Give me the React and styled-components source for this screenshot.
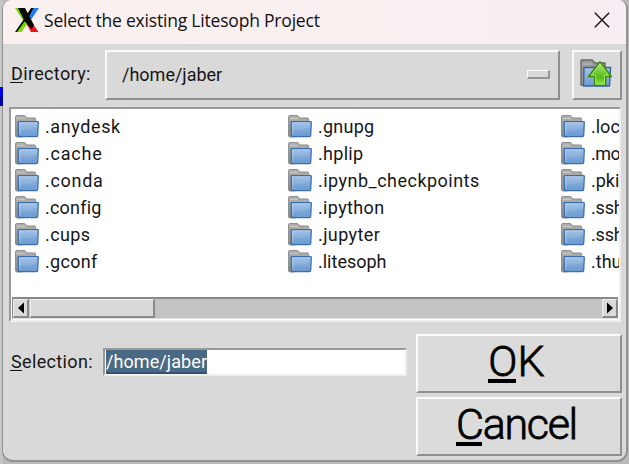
import React from 'react';
import styled, { createGlobalStyle } from 'styled-components';

const Global = createGlobalStyle`
  * { box-sizing: border-box; }
  body { margin: 0; overflow: hidden; background: #b9b9b9; }
`;

const Desktop = styled.div`
  position: relative;
  width: 629px;
  height: 464px;
  padding: 0 0 0 2px;
  background: linear-gradient(90deg, #c6c6c6 0 3px, #b9b9b9 3px);
  overflow: hidden;
  font-family: Roboto, 'Liberation Sans', sans-serif;
  color: #161616;
`;

const BlueSliver = styled.div`
  position: absolute;
  left: 0;
  top: 87px;
  width: 3px;
  height: 19px;
  background: linear-gradient(#0000f0 0 9px, #0000a8 9px);
`;

const Window = styled.div`
  width: 626px;
  height: 462px;
  border: 1px solid #929292;
  border-width: 0 2px 2px 1px;
  border-radius: 9px 9px 11px 11px;
  background: #d9d9d9;
  overflow: hidden;
`;

const TitleBar = styled.header`
  display: flex;
  align-items: center;
  height: 44px;
  padding: 0 16px 4px 12px;
  background: linear-gradient(90deg, #f9f0ef 0%, #f9efef 60%, #f8edf4 100%);
`;

const Title = styled.h1`
  flex: 1;
  margin: 0 0 0 5px;
  font: 400 17.5px/24px 'Open Sans', 'Noto Sans', sans-serif;
  letter-spacing: -0.2px;
  color: #111;
  white-space: nowrap;
`;

const Content = styled.main`
  padding: 6px 4px 0 6px;
`;

const DirectoryRow = styled.div`
  display: flex;
  height: 50px;
`;

const Label = styled.label`
  width: ${p => p.$width}px;
  padding-left: 2px;
  font-size: 18px;
  line-height: ${p => p.$line}px;
  letter-spacing: 0.35px;
  white-space: nowrap;
`;

const Mnemonic = styled.span`
  display: inline-block;
  line-height: 1;
  position: relative;
  &::after {
    content: '';
    position: absolute;
    left: ${p => (p.$large ? 0 : -1)}px;
    right: ${p => (p.$large ? 1 : 0)}px;
    bottom: 0;
    height: ${p => (p.$large ? 4 : 1.5)}px;
    background: currentColor;
  }
`;

const Raised = styled.button`
  display: flex;
  flex: none;
  align-items: center;
  justify-content: ${p => p.$justify || 'center'};
  width: ${p => p.$width}px;
  height: ${p => p.$height}px;
  padding: ${p => p.$pad || 0};
  margin: 0;
  border: 2px solid;
  border-color: #fafafa #909090 #909090 #fafafa;
  background: ${p => p.$bg || '#dbdbdb'};
  color: #161616;
  font: 400 18px Roboto, 'Liberation Sans', sans-serif;
`;

const UpButton = styled(Raised)`
  margin-left: 12px;
`;

const ActionButton = styled(Raised)`
  color: #000;
  font-size: 43px;
  font-weight: 300;
  line-height: 1;
  letter-spacing: ${p => p.$spacing}px;
  padding: 0 5px 5px 0;
  -webkit-text-stroke: 0.8px #000;
`;

const Indicator = styled.span`
  width: 23px;
  height: 9px;
  border: 1px solid;
  border-width: 1px 2px 2px 1px;
  border-color: #fff #949494 #949494 #fff;
`;

const FileList = styled.section`
  width: 612px;
  height: 215px;
  margin-top: 7px;
  border: 2px solid;
  border-color: #999 #efefef #efefef #999;
  padding: 4px 1px 0 2px;
  background: #fff;
`;

const Columns = styled.div`
  display: grid;
  grid-template-columns: repeat(3, 273px);
  height: 184px;
  width: 606px;
  overflow: hidden;
`;

const Column = styled.div`
  display: flex;
  flex-direction: column;
`;

const Entry = styled.div`
  display: flex;
  align-items: center;
  gap: 6px;
  height: 27px;
  padding-left: 2px;
  font-size: 18px;
  line-height: 24px;
  white-space: nowrap;
  letter-spacing: ${p => p.$spacing}px;
`;

const Scrollbar = styled.div`
  display: flex;
  width: 606px;
  height: 22px;
  margin-left: -1px;
  border: 2px solid #888;
  border-width: 2px 0 1px 1px;
  border-bottom-color: #ddd;
  background: #c3c3c3;
`;

const ScrollThumb = styled.div`
  width: 125px;
  margin-left: 1px;
  border: 1px solid;
  border-width: 1px 2px 2px 1px;
  border-color: #eee #8a8a8a #8a8a8a #eee;
  background: #d9d9d9;
`;

const Arrow = styled.button`
  display: flex;
  align-items: center;
  justify-content: center;
  width: 16px;
  padding: 0;
  margin-left: ${p => (p.$end ? 'auto' : '0')};
  border: 1px solid;
  border-width: 1px 2px 2px 1px;
  border-color: #eee #8a8a8a #8a8a8a #eee;
  background: #d9d9d9;
`;

const Footer = styled.footer`
  display: flex;
  margin-top: 12px;
`;

const Field = styled.div`
  width: 304px;
  height: 28px;
  margin-top: 14px;
  padding: 0 0 0 1px;
  border: 2px solid;
  border-color: #999 #eee #eee #999;
  background: #fff;
`;

const Selected = styled.span`
  display: block;
  width: 101px;
  height: 24px;
  background: #4a6984;
  border-bottom: 2px solid #34526d;
  color: #fff;
  font-size: 18px;
  line-height: 24px;
  letter-spacing: 0.08px;
  white-space: nowrap;
`;

const Actions = styled.div`
  display: flex;
  flex-direction: column;
  gap: 4px;
  margin-left: 9px;
`;

const XLogo = () => (
  <svg width="24" height="24" viewBox="0 0 24 24">
    <path d="M17 0H24L15.5 12.5L12 8Z" fill="#217cf8" />
    <path d="M13 9L23.5 24H16L11 15Z" fill="#e81520" />
    <path d="M0 0H4L12 12L9 14Z" fill="#79d900" />
    <path d="M3 0H10L15 9.5L19 17L16.5 21L10 14ZM16 0H18.5L14 9L3 24H0L9 11Z" fill="#080808" />
    <path d="M9.5 13.5L12 16L6.5 24H2Z" fill="#79d900" />
  </svg>
);

const CloseIcon = () => (
  <svg width="16" height="16" viewBox="0 0 16 16">
    <path d="M.8 .8L15.2 15.2M15.2 .8L.8 15.2" stroke="#161316" strokeWidth="1.4" />
  </svg>
);

const Folder = () => (
  <svg width="24" height="23" viewBox="0 0 24 23">
    <defs>
      <linearGradient id="folderFront" x2="0" y2="1">
        <stop stopColor="#a5c4e7" />
        <stop offset="1" stopColor="#6d9bd1" />
      </linearGradient>
      <linearGradient id="folderBack" x2="0" y2="1">
        <stop stopColor="#b4b4b2" />
        <stop offset="1" stopColor="#858583" />
      </linearGradient>
    </defs>
    <path d="M.6 21V1.6Q.6.6 1.6.6H9.2Q10.2.6 10.7 1.6L11.4 3H19.5Q20.7 3 20.7 4.3V20L4 22H1.5Z" fill="url(#folderBack)" stroke="#888886" />
    <path d="M1.7 3.5H10" stroke="#c8c8c5" />
    <path d="M3.9 6.7H22.5Q23.3 6.7 23.3 7.5L22.7 20.3Q22.6 21.7 21.5 21.7H4.7Q3.7 21.7 3.6 20.4L3.1 7.5Q3.1 6.7 3.9 6.7Z" fill="url(#folderFront)" stroke="#3a6fae" strokeWidth="1.3" />
    <path d="M4.4 7.9H22M4.5 8L5 20" stroke="#b4cfec" strokeWidth=".8" fill="none" />
    <path d="M5 16Q16 15.5 21.7 12.2V20.3H5Z" fill="#6395cf" opacity=".25" />
  </svg>
);

const UpFolder = () => (
  <svg width="32" height="29" viewBox="0 0 32 29">
    <defs>
      <linearGradient id="upArrow" x2="0" y2="1">
        <stop stopColor="#b7e77d" />
        <stop offset=".65" stopColor="#54bd17" />
        <stop offset="1" stopColor="#8fe349" />
      </linearGradient>
    </defs>
    <path d="M1 26V2Q1 1 2 1H12L15 4H25V26Z" fill="#9a9a98" stroke="#696967" strokeWidth="1.4" />
    <path d="M2.3 5H12" stroke="#c0c0be" />
    <path d="M4 8.5H30.6L29.5 27H3.5Z" fill="url(#folderFront)" stroke="#3465a4" strokeWidth="1.4" />
    <path d="M20 2.8L31.4 17.5H25.7V26.2H14.5V17.5H8.5Z" fill="url(#upArrow)" stroke="#3e8b0a" strokeWidth="1.4" strokeLinejoin="round" />
    <path d="M20 5L28.5 16.3H24.4V25H15.8V16.3H11.3Z" fill="none" stroke="#b7ef77" strokeWidth=".8" />
  </svg>
);

const Triangle = ({ right }) => (
  <svg width="8" height="12" viewBox="0 0 8 12">
    <path d={right ? 'M1 .5L7 6L1 11.5Z' : 'M7 .5L1 6L7 11.5Z'} fill="#000" />
  </svg>
);

// Each entry: visible name and its letter spacing.
const columns = [
  [['.anydesk', 0.6], ['.cache', 0.8], ['.conda', 0.7], ['.config', 0.2], ['.cups', 0.4], ['.gconf', 0.3]],
  [['.gnupg', 0.25], ['.hplip', 0.3], ['.ipynb_checkpoints', 0.48], ['.ipython', 0.35], ['.jupyter', 0.4], ['.litesoph', 0]],
  [['.loc', 0], ['.mo', -0.5], ['.pki', 0], ['.ssh', -0.2], ['.ssh', -0.2], ['.thu', 0]],
];

export default function App() {
  return (
    <Desktop>
      <Global />
      <Window>
        <TitleBar>
          <XLogo />
          <Title>Select the existing Litesoph Project</Title>
          <CloseIcon />
        </TitleBar>
        <Content>
          <DirectoryRow>
            <Label $width={97} $line={48}>
              <Mnemonic>D</Mnemonic>irectory:
            </Label>
            <Raised $width={455} $height={50} $justify="space-between" $pad="0 8px 2px 15px" $bg="#d9d9d9">
              <span>/home/jaber</span>
              <Indicator />
            </Raised>
            <UpButton $width={50} $height={50} $pad="0 2px 3px 0" aria-label="Parent directory">
              <UpFolder />
            </UpButton>
          </DirectoryRow>
          <FileList>
            <Columns>
              {columns.map((entries, c) => (
                <Column key={c}>
                  {entries.map(([name, spacing], i) => (
                    <Entry key={i} $spacing={spacing}>
                      <Folder />
                      <span>{name}</span>
                    </Entry>
                  ))}
                </Column>
              ))}
            </Columns>
            <Scrollbar>
              <Arrow aria-label="Scroll left"><Triangle /></Arrow>
              <ScrollThumb />
              <Arrow $end aria-label="Scroll right"><Triangle right /></Arrow>
            </Scrollbar>
          </FileList>
          <Footer>
            <Label $width={94} $line={56}>
              <Mnemonic>S</Mnemonic>election:
            </Label>
            <Field><Selected>/home/jaber</Selected></Field>
            <Actions>
              <ActionButton $width={206} $height={59} $spacing={0}>
                <span><Mnemonic $large>O</Mnemonic>K</span>
              </ActionButton>
              <ActionButton $width={206} $height={59} $spacing={-1.3}>
                <span><Mnemonic $large>C</Mnemonic>ancel</span>
              </ActionButton>
            </Actions>
          </Footer>
        </Content>
      </Window>
      <BlueSliver />
    </Desktop>
  );
}
